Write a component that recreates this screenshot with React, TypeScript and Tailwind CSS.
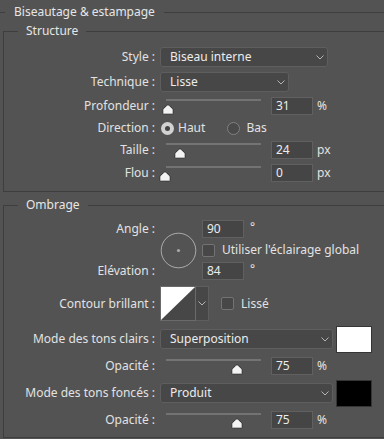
import React from "react";

const lineCls = "border-[#3e3e3e]";
const labelCls = "w-[152px] shrink-0 whitespace-nowrap pr-[1px] text-right";

function Chevron() {
  return (
    <svg width="8" height="5" viewBox="0 0 8 5" className="shrink-0">
      <polyline points="0.5,0.5 4,4 7.5,0.5" fill="none" stroke="#b4b4b4" strokeWidth="1" />
    </svg>
  );
}

function Select({ value, className }: { value: string; className: string }) {
  return (
    <div
      className={`flex h-[20px] items-center justify-between rounded-[3px] border border-[#5e5e5e] bg-[#474747] pl-[9px] pr-[3px] ${className}`}
    >
      <span className="text-[#ececec]">{value}</span>
      <Chevron />
    </div>
  );
}

function NumInput({ value, className = "w-[42px]" }: { value: string; className?: string }) {
  return (
    <div
      className={`flex h-[18px] items-center border border-[#606060] bg-[#454545] pl-[4px] text-[#ececec] ${className}`}
    >
      {value}
    </div>
  );
}

function Slider({ thumb }: { thumb: number }) {
  return (
    <div className="relative h-[18px] w-[95px] shrink-0">
      <div className="mt-[4px] h-[2px] bg-[#737373]" />
      <svg
        className="absolute top-[5px]"
        style={{ left: thumb - 6 }}
        width="12"
        height="11"
        viewBox="0 0 12 11"
      >
        <path
          d="M6 0.8 Q6.6 0.8 7.2 1.4 L10.6 4.8 Q11.2 5.4 11.2 6.2 V9.6 Q11.2 10.2 10.6 10.2 H1.4 Q0.8 10.2 0.8 9.6 V6.2 Q0.8 5.4 1.4 4.8 L4.8 1.4 Q5.4 0.8 6 0.8 Z"
          fill="#f3f3f3"
          stroke="#2f2f2f"
          strokeWidth="1"
        />
      </svg>
    </div>
  );
}

function SliderRow({ label, thumb, value, unit, className = "" }: { label: string; thumb: number; value: string; unit: string; className?: string }) {
  return (
    <div className={`flex h-[18px] items-center ${className}`}>
      <div className={labelCls}>{label}</div>
      <div className="ml-[10px]">
        <Slider thumb={thumb} />
      </div>
      <div className="ml-[10px]">
        <NumInput value={value} />
      </div>
      <span className="ml-[4px]">{unit}</span>
    </div>
  );
}

function Checkbox({ className = "" }: { className?: string }) {
  return <span className={`block h-[13px] w-[13px] shrink-0 rounded-[2px] border border-[#737373] bg-[#474747] ${className}`} />;
}

export default function App() {
  return (
    <div className="h-[439px] w-[384px] overflow-hidden bg-[#535353] font-['Noto_Sans',sans-serif] text-[12px] leading-[16px] text-[#e2e2e2]">
      <fieldset className={`mt-[4px] w-[420px] border-t ${lineCls}`}>
        <legend className="ml-[5px] px-[9px] leading-[16px] text-[#e6e6e6]">Biseautage &amp; estampage</legend>

        {/* Structure */}
        <fieldset className={`ml-[3px] mt-[3px] w-[400px] border-b border-l border-t ${lineCls} pb-[9px] pt-[8px]`}>
          <legend className="ml-[14px] px-[8px] leading-[16px] text-[#e6e6e6]">Structure</legend>

          <div className="flex h-[20px] items-center">
            <div className={labelCls}>Style :</div>
            <Select value="Biseau interne" className="ml-[4px] w-[168px]" />
          </div>

          <div className="mt-[5px] flex h-[20px] items-center">
            <div className={labelCls}>Technique :</div>
            <Select value="Lisse" className="ml-[4px] w-[129px]" />
          </div>

          <SliderRow label="Profondeur :" thumb={2} value="31" unit="%" className="mt-[5px]" />

          <div className="mt-[4px] flex h-[18px] items-center">
            <div className={labelCls}>Direction :</div>
            <span className="ml-[5px] flex h-[13px] w-[13px] items-center justify-center rounded-full bg-[#d2d2d2]">
              <span className="h-[5px] w-[5px] rounded-full bg-[#444444]" />
            </span>
            <span className="ml-[4px]">Haut</span>
            <span className="ml-[22px] h-[13px] w-[13px] rounded-full border border-[#808080] bg-[#4a4a4a]" />
            <span className="ml-[6px]">Bas</span>
          </div>

          <SliderRow label="Taille :" thumb={14} value="24" unit="px" className="mt-[4px]" />
          <SliderRow label="Flou :" thumb={-1} value="0" unit="px" className="mt-[5px]" />
        </fieldset>

        {/* Ombrage */}
        <fieldset className={`ml-[3px] mt-[5px] w-[400px] border-b border-l border-t ${lineCls} pb-[8px] pt-[7px]`}>
          <legend className="ml-[14px] px-[8px] leading-[16px] text-[#e6e6e6]">Ombrage</legend>

          <div className="flex items-center">
            <div className="flex h-[60px] flex-col justify-between">
              <div className={`${labelCls} flex h-[18px] items-center justify-end`}>Angle :</div>
              <div className={`${labelCls} flex h-[18px] items-center justify-end`}>Elévation :</div>
            </div>
            <svg className="ml-[4px]" width="37" height="37" viewBox="0 0 37 37">
              <circle cx="18.5" cy="18.5" r="17.3" fill="none" stroke="#ababab" strokeWidth="1" />
              <circle cx="18.5" cy="18.5" r="1.6" fill="#a8a8a8" />
            </svg>
            <div className="ml-[5px] flex h-[60px] flex-col justify-between">
              <div className="flex h-[18px] items-center">
                <NumInput value="90" />
                <span className="ml-[6px] -mt-[4px]">°</span>
              </div>
              <div className="flex items-center">
                <Checkbox />
                <span className="ml-[7px]">Utiliser l'éclairage global</span>
              </div>
              <div className="flex h-[18px] items-center">
                <NumInput value="84" />
                <span className="ml-[6px] -mt-[4px]">°</span>
              </div>
            </div>
          </div>

          <div className="mt-[6px] flex h-[35px] items-center">
            <div className={labelCls}>Contour brillant :</div>
            <div className="ml-[4px] flex h-[35px]">
              <div className="border border-[#6a6a6a]">
                <svg width="34" height="33" viewBox="0 0 34 33" className="block">
                  <rect width="34" height="33" fill="#474747" />
                  <polygon points="0,0 34,0 0,33" fill="#ffffff" />
                </svg>
              </div>
              <div className="flex w-[13px] items-center justify-center border-y border-r border-[#5e5e5e] bg-[#474747]">
                <Chevron />
              </div>
            </div>
            <Checkbox className="ml-[12px]" />
            <span className="ml-[7px]">Lissé</span>
          </div>

          <div className="mt-[5px] flex h-[26px] items-center">
            <div className={labelCls}>Mode des tons clairs :</div>
            <Select value="Superposition" className="ml-[4px] w-[173px]" />
            <div className="ml-[3px] h-[27px] w-[36px] border border-[#353535] bg-white" />
          </div>

          <SliderRow label="Opacité :" thumb={71} value="75" unit="%" className="mt-[5px]" />

          <div className="mt-[5px] flex h-[26px] items-center">
            <div className={labelCls}>Mode des tons foncés :</div>
            <Select value="Produit" className="ml-[4px] w-[173px]" />
            <div className="ml-[3px] h-[27px] w-[36px] border border-[#353535] bg-black" />
          </div>

          <SliderRow label="Opacité :" thumb={71} value="75" unit="%" className="mt-[5px]" />
        </fieldset>
      </fieldset>
    </div>
  );
}
